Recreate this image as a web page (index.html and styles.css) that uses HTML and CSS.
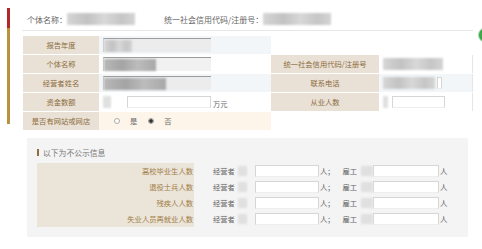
FILE: index.html
```html
<!DOCTYPE html>
<html lang="zh-CN">
<head>
    <meta charset="UTF-8">
    <title>年度报告</title>
    <link rel="stylesheet" href="styles.css">
</head>
<body>
    <div class="page">
        <div class="rail">
            <span class="rail-red"></span>
            <span class="rail-gold"></span>
        </div>

        <div class="main">
            <div class="head">
                <span>个体名称：</span>
                <span class="blur head-blur"></span>
                <span class="head-code">统一社会信用代码/注册号：</span>
                <span class="blur head-blur"></span>
            </div>

            <div class="info">
                <div class="lbl">报告年度</div>
                <div class="val odd"><div class="field"><span class="blur" style="width:28px"></span></div></div>
                <div class="spacer"></div>

                <div class="lbl">个体名称</div>
                <div class="val"><div class="field plain"><span class="blur dark" style="width:52px"></span></div></div>
                <div class="lbl">统一社会信用代码/注册号</div>
                <div class="val side"><span class="blur" style="width:60px"></span></div>

                <div class="lbl">经营者姓名</div>
                <div class="val odd"><div class="field"><span class="blur dark" style="width:62px"></span></div></div>
                <div class="lbl">联系电话</div>
                <div class="val odd side"><span class="blur" style="width:52px"></span><span class="box tiny"></span></div>

                <div class="lbl">资金数额</div>
                <div class="val">
                    <span class="blur light" style="width:8px"></span>
                    <span class="box money"></span>
                    <span class="unit">万元</span>
                </div>
                <div class="lbl">从业人数</div>
                <div class="val side"><span class="blur light" style="width:5px"></span><span class="box staff"></span></div>

                <div class="lbl">是否有网站或网店</div>
                <div class="val peach">
                    <span class="radio"></span><span class="opt">是</span>
                    <span class="radio on"></span><span class="opt">否</span>
                </div>
                <div class="spacer"></div>
            </div>

            <div class="private">
                <div class="private-title"><span class="mark"></span>以下为不公示信息</div>
                <div class="rows">
                    <div class="row">
                        <div class="row-lbl">高校毕业生人数</div>
                        <span class="who">经营者</span><span class="blur light chip"></span><span class="box count"></span><span class="sep">人；</span>
                        <span class="who">雇工</span><span class="blur light chip2"></span><span class="box count wide"></span><span class="sep">人</span>
                    </div>
                    <div class="row">
                        <div class="row-lbl">退役士兵人数</div>
                        <span class="who">经营者</span><span class="blur light chip"></span><span class="box count"></span><span class="sep">人；</span>
                        <span class="who">雇工</span><span class="blur light chip2"></span><span class="box count wide"></span><span class="sep">人</span>
                    </div>
                    <div class="row">
                        <div class="row-lbl">残疾人人数</div>
                        <span class="who">经营者</span><span class="blur light chip"></span><span class="box count"></span><span class="sep">人；</span>
                        <span class="who">雇工</span><span class="blur light chip2"></span><span class="box count wide"></span><span class="sep">人</span>
                    </div>
                    <div class="row">
                        <div class="row-lbl">失业人员再就业人数</div>
                        <span class="who">经营者</span><span class="blur light chip"></span><span class="box count"></span><span class="sep">人；</span>
                        <span class="who">雇工</span><span class="blur light chip2"></span><span class="box count wide"></span><span class="sep">人</span>
                    </div>
                </div>
            </div>
        </div>

        <span class="badge"></span>
    </div>
</body>
</html>
```

FILE: styles.css
```css
* {
    box-sizing: border-box;
    margin: 0;
    padding: 0;
}

body {
    font-family: "Noto Sans CJK SC", "Noto Sans", sans-serif;
    background: #fff;
    color: #555;
    overflow: hidden;
}

.page {
    position: relative;
    display: flex;
    width: 482px;
    height: 249px;
    overflow: hidden;
}

/* left colour rail */
.rail {
    width: 22px;
    padding: 8px 0 0 7px;
    display: flex;
    flex-direction: column;
}

.rail-red {
    width: 3px;
    height: 20px;
    background: #b3282a;
}

.rail-gold {
    width: 3px;
    height: 96px;
    background: #b8923f;
}

.main {
    width: 451px;
    padding-top: 8px;
}

/* header line */
.head {
    height: 23px;
    display: flex;
    align-items: center;
    padding-left: 5px;
    border-bottom: 1px solid #e8e8e8;
    font-size: 8px;
    color: #666;
}

.head-blur {
    width: 68px;
    height: 15px;
}

.head-code {
    margin-left: 29px;
}

.blur {
    display: inline-block;
    height: 12px;
    background: linear-gradient(90deg, #d6d6d6, #c2c2c2 30%, #d8d8d8 55%, #c6c6c6 80%, #d4d4d4);
    filter: blur(1px);
}

.blur.dark {
    background: linear-gradient(90deg, #b8b8b8, #a4a4a4 35%, #bcbcbc 65%, #a8a8a8);
}

.blur.light {
    background: #e0e0e0;
}

/* main info grid */
.info {
    display: grid;
    grid-template-columns: 76px 172px 108px 94px;
    grid-auto-rows: 18px;
    row-gap: 1px;
    margin: 5px 0 0 1px;
    font-size: 7.3px;
}

.lbl {
    background: #e9e1d5;
    color: #8d6c3e;
    display: flex;
    align-items: center;
    justify-content: center;
}

.val {
    display: flex;
    align-items: center;
    padding-left: 4px;
    background: #fff;
    color: #666;
}

.val.odd {
    background: #f2f6f8;
}

.val.peach {
    background: #fdf5ea;
    padding-left: 15px;
}

.val.side {
    border-right: 1px solid #e6e6e6;
}

.spacer {
    grid-column: span 2;
}

.field {
    width: 108px;
    height: 14px;
    display: flex;
    align-items: center;
    background: #ececec;
    border-top: 1px solid #9c9c9c;
    border-left: 1px solid #cfcfcf;
}

.field.plain {
    background: #f1f1f1;
}

.box {
    display: inline-block;
    height: 12px;
    background: #fff;
    border: 1px solid #d6d6d6;
    border-bottom-color: #eee;
}

.box.tiny {
    width: 5px;
    margin-left: 2px;
}

.box.money {
    width: 84px;
    margin-left: 16px;
}

.box.staff {
    width: 53px;
    margin-left: 4px;
}

.unit {
    margin-left: 2px;
    padding-top: 3px;
}

.radio {
    width: 6px;
    height: 6px;
    border: 1px solid #aaa;
    border-radius: 50%;
    background: #fff;
}

.radio.on {
    background: radial-gradient(circle, #333 0 1.5px, #cfcfcf 2px);
    border-color: #999;
}

.opt {
    margin: 0 11px 0 10px;
    color: #666;
}

/* non public block */
.private {
    width: 441px;
    height: 99px;
    margin: 8px 0 0 5px;
    padding: 9px 0 0 10px;
    background: #f4f4f4;
    font-size: 7.3px;
}

.private-title {
    display: flex;
    align-items: center;
    gap: 4px;
    height: 10px;
    color: #777;
    font-size: 7.8px;
}

.mark {
    width: 2px;
    height: 7px;
    background: #8d6c3e;
}

.rows {
    margin-top: 6px;
    display: flex;
    flex-direction: column;
}

.row {
    display: flex;
    align-items: center;
    height: 16px;
    color: #666;
}

.row-lbl {
    width: 157px;
    height: 16px;
    line-height: 16px;
    padding-right: 1px;
    text-align: right;
    background: #ebe4d9;
    color: #a07d45;
}

.who {
    margin-left: 19px;
}

.chip {
    width: 9px;
    height: 10px;
    margin-left: 3px;
}

.chip2 {
    width: 12px;
    height: 10px;
    margin-left: 4px;
}

.box.count {
    width: 64px;
    margin-left: 8px;
}

.box.count.wide {
    width: 66px;
    margin-left: 0;
}

.sep {
    margin-left: 1px;
}

.sep + .who {
    margin-left: 8px;
}

.badge {
    position: absolute;
    left: 478px;
    top: 27px;
    width: 16px;
    height: 16px;
    border-radius: 50%;
    background: #3ea84b;
    border: 1px solid #a9d8ae;
}
```
